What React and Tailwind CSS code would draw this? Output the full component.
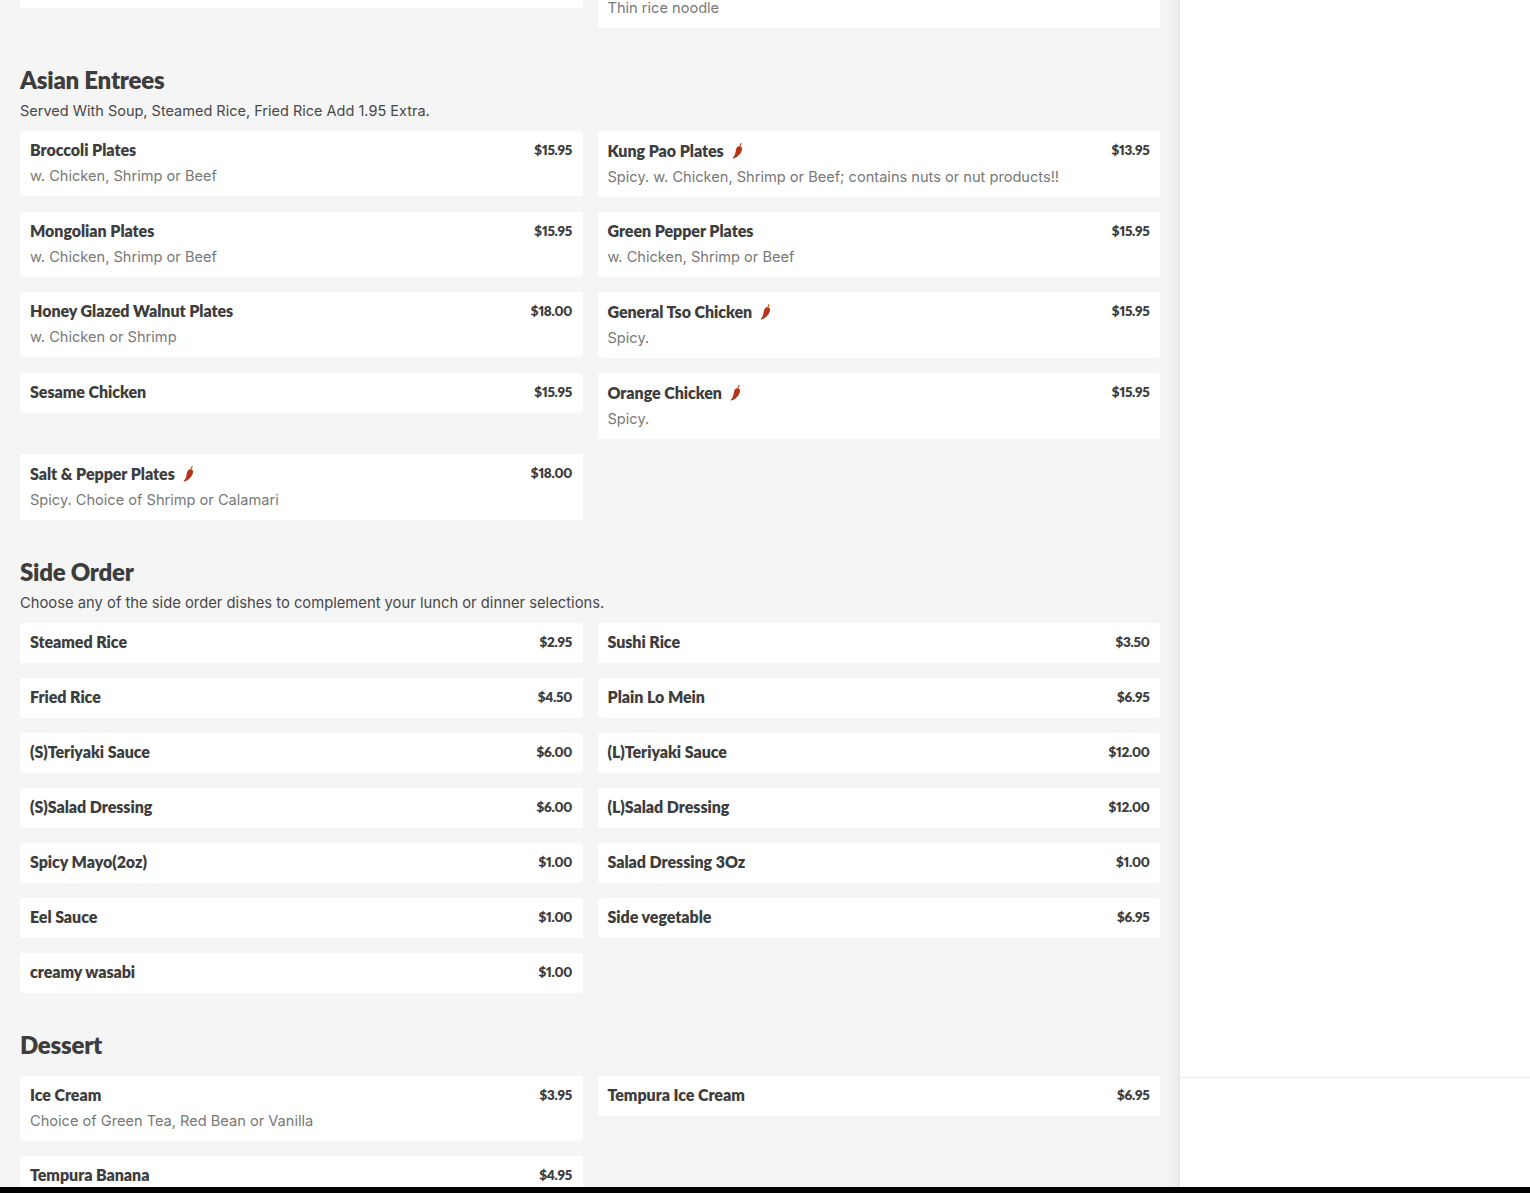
const asian = [
  [
    { name: "Broccoli Plates", price: "$15.95", desc: "w. Chicken, Shrimp or Beef" },
    { name: "Kung Pao Plates", price: "$13.95", desc: "Spicy. w. Chicken, Shrimp or Beef; contains nuts or nut products!!", spicy: true },
  ],
  [
    { name: "Mongolian Plates", price: "$15.95", desc: "w. Chicken, Shrimp or Beef" },
    { name: "Green Pepper Plates", price: "$15.95", desc: "w. Chicken, Shrimp or Beef" },
  ],
  [
    { name: "Honey Glazed Walnut Plates", price: "$18.00", desc: "w. Chicken or Shrimp" },
    { name: "General Tso Chicken", price: "$15.95", desc: "Spicy.", spicy: true },
  ],
  [
    { name: "Sesame Chicken", price: "$15.95" },
    { name: "Orange Chicken", price: "$15.95", desc: "Spicy.", spicy: true },
  ],
  [{ name: "Salt & Pepper Plates", price: "$18.00", desc: "Spicy. Choice of Shrimp or Calamari", spicy: true }],
];

const sides = [
  [{ name: "Steamed Rice", price: "$2.95" }, { name: "Sushi Rice", price: "$3.50" }],
  [{ name: "Fried Rice", price: "$4.50" }, { name: "Plain Lo Mein", price: "$6.95" }],
  [{ name: "(S)Teriyaki Sauce", price: "$6.00" }, { name: "(L)Teriyaki Sauce", price: "$12.00" }],
  [{ name: "(S)Salad Dressing", price: "$6.00" }, { name: "(L)Salad Dressing", price: "$12.00" }],
  [{ name: "Spicy Mayo(2oz)", price: "$1.00" }, { name: "Salad Dressing 3Oz", price: "$1.00" }],
  [{ name: "Eel Sauce", price: "$1.00" }, { name: "Side vegetable", price: "$6.95" }],
  [{ name: "creamy wasabi", price: "$1.00" }],
];

const desserts = [
  [
    { name: "Ice Cream", price: "$3.95", desc: "Choice of Green Tea, Red Bean or Vanilla" },
    { name: "Tempura Ice Cream", price: "$6.95" },
  ],
  [{ name: "Tempura Banana", price: "$4.95" }],
];

function Chili() {
  return (
    <svg viewBox="0 0 14 18" className="w-[14px] h-[18px] shrink-0 ml-[6px]">
      <path d="M8 4.600c2.400-.9 4.400.4 4 2.800-.6 3.500-3.700 7.400-8.300 9-.9.300-1.300-.4-.7-.9 1.700-1.600 2.300-3.900 2.700-6.200.4-2.200.9-4.100 2.300-4.700z" fill="#b5341a" />
      <path d="M10.200 4.800c-.1-1.400.2-2.600 1.200-3.600" fill="none" stroke="#c8702a" strokeWidth="1.500" />
    </svg>
  );
}

function Card({ item }) {
  return (
    <div className="bg-white rounded-[3px] px-[10px] py-[10px] flex justify-between items-start gap-3">
      <div className="min-w-0">
        {item.spicy ? (
          <div className="flex items-center h-[21px] pb-[2px] text-[16px] leading-[19px] font-extrabold tracking-[-0.05px] text-[#3d3d3d] font-['Lato',sans-serif]">
            {item.name}
            <Chili />
          </div>
        ) : (
          <div className="h-[20px] text-[16px] leading-[18px] font-extrabold tracking-[-0.05px] text-[#3d3d3d] font-['Lato',sans-serif]">
            {item.name}
          </div>
        )}
        {item.desc && (
          <p className="mt-[5px] text-[14.6px] leading-[20px] text-[#787878] font-['Inter',sans-serif]">{item.desc}</p>
        )}
      </div>
      <span className="mr-[0.5px] text-[13.5px] leading-[18px] font-extrabold tracking-[-0.3px] proportional-nums text-[#3d3d3d] font-['Lato',sans-serif]">
        {item.price}
      </span>
    </div>
  );
}

function Rows({ rows }) {
  return (
    <div className="flex flex-col gap-[15px]">
      {rows.map((row, i) => (
        <div key={i} className="grid grid-cols-2 gap-x-[15px] items-start">
          {row.map((item) => (
            <Card key={item.name} item={item} />
          ))}
        </div>
      ))}
    </div>
  );
}

function Section({ title, note, noteSize, rows, className }) {
  return (
    <section className={className}>
      <h2 className="h-[30px] text-[24px] leading-[28px] font-extrabold tracking-[-0.25px] text-[#3d3d3d] font-['Lato',sans-serif]">
        {title}
      </h2>
      {note ? (
        <p className={`mt-[5px] mb-[10px] leading-[20px] text-[#484848] font-['Inter',sans-serif] ${noteSize}`}>{note}</p>
      ) : (
        <div className="h-[15px]" />
      )}
      <Rows rows={rows} />
    </section>
  );
}

export default function App() {
  return (
    <div className="h-[1193px] overflow-hidden flex flex-col bg-black">
      <div className="h-[1187px] flex overflow-hidden">
        <main className="w-[1179px] shrink-0 bg-[#f5f5f5] pl-5 pr-[19px] overflow-hidden shadow-[inset_-18px_0_14px_-14px_rgba(0,0,0,0.05)]">
          <div className="grid grid-cols-2 gap-x-[15px] items-start">
            <div className="bg-white rounded-b-[3px] h-[8px]" />
            <div className="bg-white rounded-b-[3px] h-[28px] px-[10px] overflow-hidden">
              <p className="text-[14.6px] leading-[16px] text-[#787878] font-['Inter',sans-serif]">Thin rice noodle</p>
            </div>
          </div>
          <Section
            className="mt-[38px]"
            title="Asian Entrees"
            note="Served With Soup, Steamed Rice, Fried Rice Add 1.95 Extra."
            noteSize="text-[14.5px]"
            rows={asian}
          />
          <Section
            className="mt-[38px]"
            title="Side Order"
            note="Choose any of the side order dishes to complement your lunch or dinner selections."
            noteSize="text-[14.78px]"
            rows={sides}
          />
          <Section className="mt-[38px]" title="Dessert" rows={desserts} />
        </main>
        <aside className="flex-1 bg-white border-l border-[#e4e4e4] flex flex-col">
          <div className="h-[1078px] shrink-0 border-b border-[#ececec]" />
        </aside>
      </div>
    </div>
  );
}
